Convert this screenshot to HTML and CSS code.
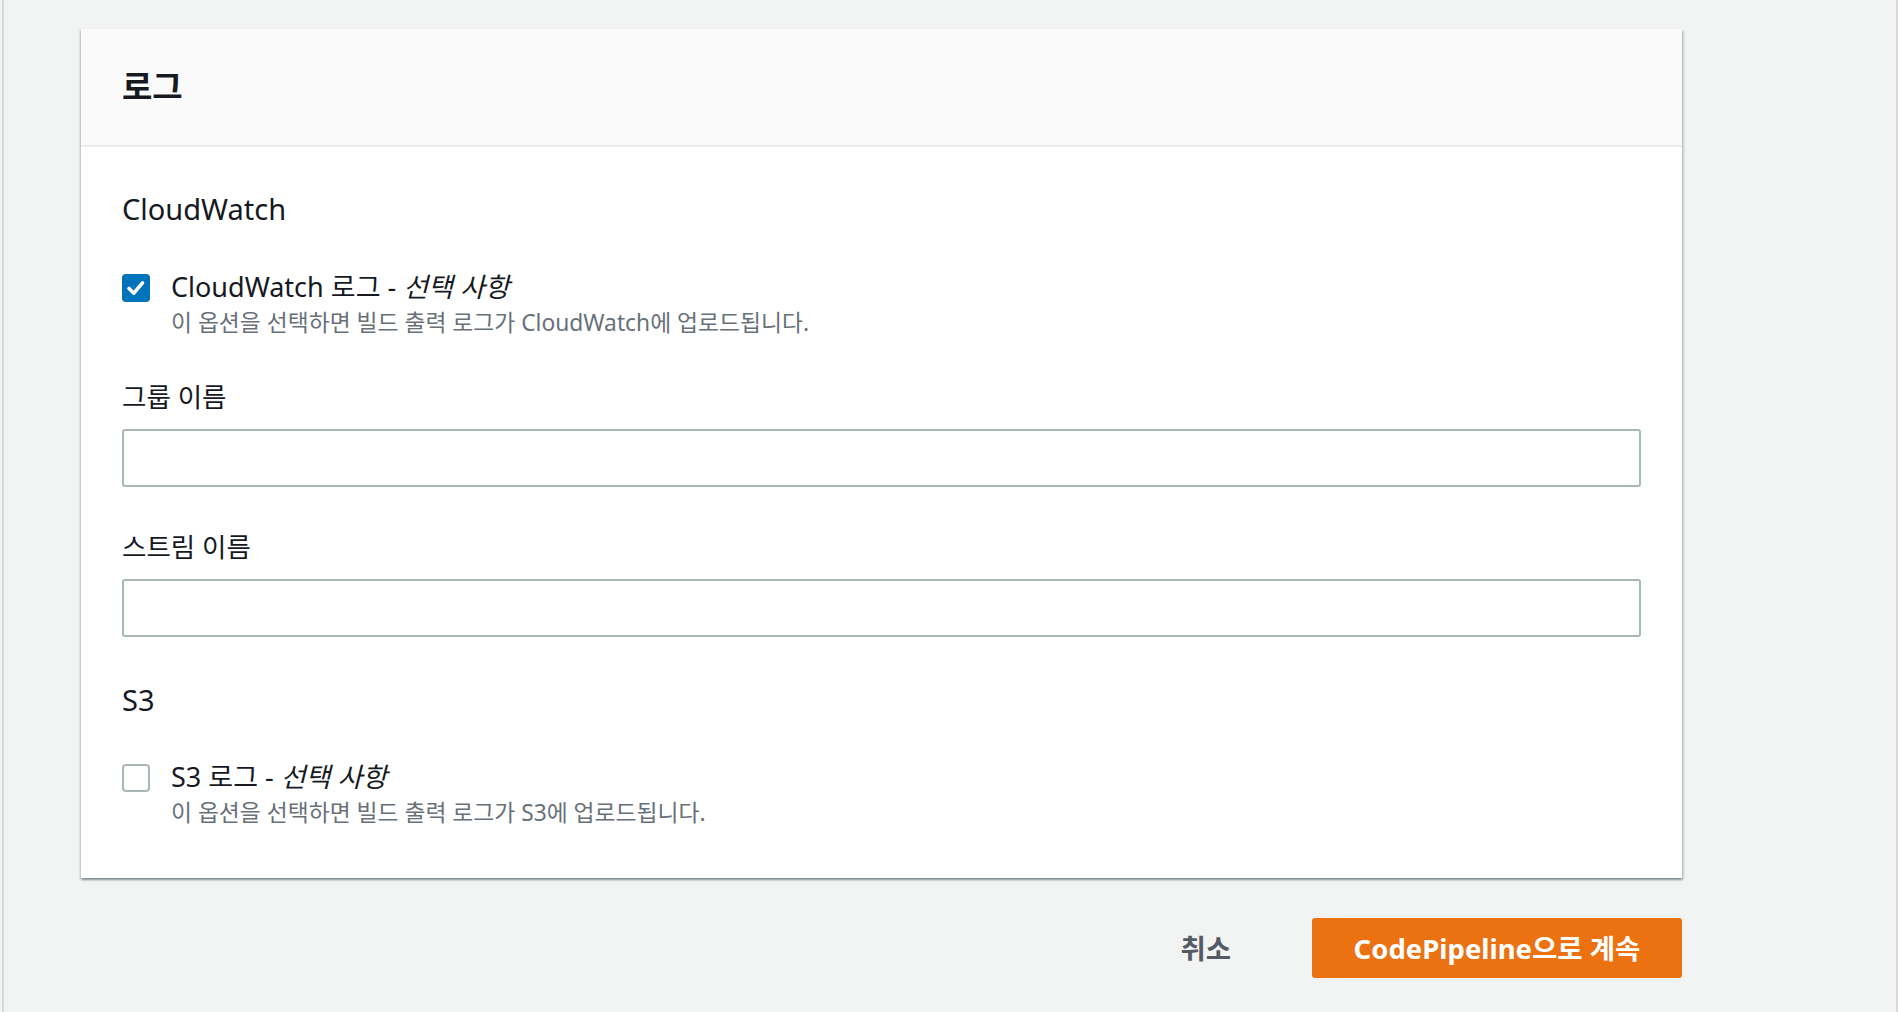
FILE: index.html
```html
<!DOCTYPE html>
<html lang="ko">
<head>
    <meta charset="UTF-8">
    <meta name="viewport" content="width=device-width, initial-scale=1.0">
    <title>로그</title>
    <link rel="stylesheet" href="styles.css">
</head>
<body>
<div class="page">

    <div class="card">
        <div class="card-header">
            <h2>로그</h2>
        </div>
        <div class="card-body">

            <h3 class="section-title">CloudWatch</h3>
            <label class="check-row">
                <span class="checkbox checked">
                    <svg width="28" height="28" viewBox="0 0 28 28"><path d="M7 14.5 L11.8 19.2 L20.5 8.8" fill="none" stroke="#fff" stroke-width="3.6" stroke-linecap="round" stroke-linejoin="round"/></svg>
                </span>
                <span class="check-text">
                    <span class="check-label">CloudWatch 로그 - <i>선택 사항</i></span>
                    <span class="check-desc">이 옵션을 선택하면 빌드 출력 로그가 CloudWatch에 업로드됩니다.</span>
                </span>
            </label>

            <div class="field">
                <div class="field-label">그룹 이름</div>
                <input type="text" class="text-input">
            </div>
            <div class="field">
                <div class="field-label">스트림 이름</div>
                <input type="text" class="text-input">
            </div>

            <h3 class="section-title s3">S3</h3>
            <label class="check-row">
                <span class="checkbox"></span>
                <span class="check-text">
                    <span class="check-label">S3 로그 - <i>선택 사항</i></span>
                    <span class="check-desc">이 옵션을 선택하면 빌드 출력 로그가 S3에 업로드됩니다.</span>
                </span>
            </label>

        </div>
    </div>

    <div class="actions">
        <button class="btn-link">취소</button>
        <button class="btn-primary">CodePipeline으로 계속</button>
    </div>

</div>
</body>
</html>
```

FILE: styles.css
```css
html, body {
    margin: 0;
    height: 100%;
}
body {
    font-family: "Noto Sans", "Noto Sans CJK KR", sans-serif;
    background-color: #f2f3f3;
    color: #16191f;
}
.page {
    margin-left: 2px;
    min-height: 100%;
    box-sizing: border-box;
    border-left: 2px solid #d5dbdb;
    border-right: 2px solid #d5dbdb;
    padding: 29px 214px 0 77px;
}
.card {
    background-color: #fff;
    box-shadow: 0 2px 2px 0 rgba(0, 28, 36, 0.3), 2px 2px 2px 0 rgba(0, 28, 36, 0.15), -1px 1px 2px 0 rgba(0, 28, 36, 0.15);
}
.card-header {
    background-color: #fafafa;
    border-bottom: 2px solid #eaeded;
    padding: 40px 41px;
}
.card-header h2 {
    margin: 0;
    font-size: 33px;
    line-height: 36px;
    font-weight: bold;
}
.card-body {
    padding: 45px 41px 50px;
}
.section-title {
    margin: 0 0 44px;
    font-size: 29px;
    line-height: 34px;
    font-weight: normal;
}
.section-title.s3 {
    margin-top: 46px;
    margin-bottom: 43px;
}
.check-row {
    display: flex;
    align-items: flex-start;
}
.checkbox {
    width: 28px;
    height: 28px;
    margin-top: 4px;
    margin-right: 21px;
    box-sizing: border-box;
    border: 2px solid #aab7b8;
    border-radius: 4px;
    background-color: #fff;
    flex-shrink: 0;
}
.checkbox.checked {
    border: none;
    background-color: #0073bb;
}
.checkbox svg {
    display: block;
}
.check-text {
    display: flex;
    flex-direction: column;
}
.check-label {
    font-size: 27px;
    line-height: 34px;
}
.check-desc {
    margin-top: 4px;
    font-size: 22.8px;
    line-height: 30px;
    color: #687078;
}
.field {
    margin-top: 43px;
}
.field + .field {
    margin-top: 44px;
}
.field-label {
    font-size: 26.5px;
    line-height: 32px;
    margin-bottom: 16px;
}
.text-input {
    display: block;
    width: 100%;
    height: 58px;
    box-sizing: border-box;
    border: 2px solid #aab7b8;
    border-radius: 3px;
    background-color: #fff;
}
.actions {
    display: flex;
    justify-content: flex-end;
    align-items: center;
    gap: 41px;
    margin-top: 40px;
}
.actions button {
    font-family: inherit;
    font-size: 27.5px;
    font-weight: bold;
    height: 60px;
    padding-bottom: 4px;
    border: none;
    border-radius: 3px;
    cursor: pointer;
}
.btn-link {
    background: none;
    color: #545b64;
    padding-left: 40px;
    padding-right: 40px;
    font-size: 27px;
}
.btn-primary {
    background-color: #ec7211;
    color: #fff;
    padding-left: 30px;
    padding-right: 30px;
    width: 370px;
}
```
